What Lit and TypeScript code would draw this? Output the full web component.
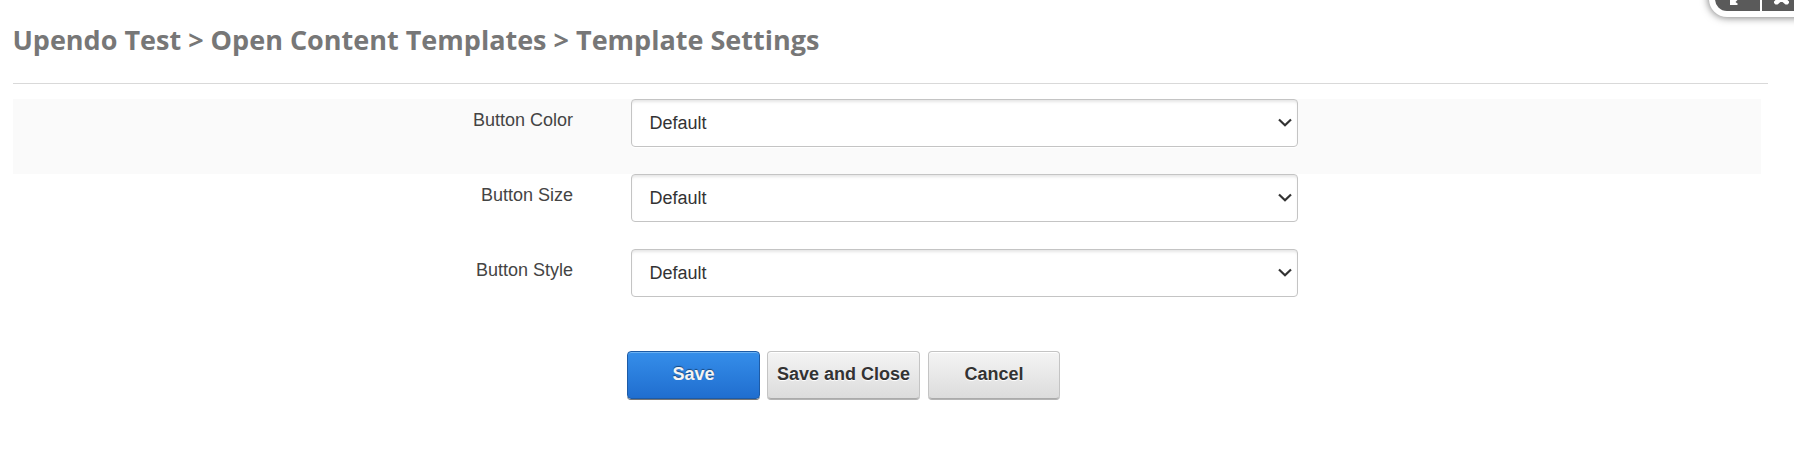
import { LitElement, html, css } from "lit";
import { customElement } from "lit/decorators.js";

@customElement("app-root")
export class AppRoot extends LitElement {
  static styles = css`
    :host {
      display: block;
      position: relative;
      box-sizing: border-box;
      height: 453px;
      padding-left: 13px;
      overflow: hidden;
      background: #fff;
      font: 18px/27px "Liberation Sans", Arial, sans-serif;
      color: #444;
    }
    * { box-sizing: border-box; }
    h1 {
      margin: 0 26px 15px 0;
      height: 84px;
      padding-top: 21px;
      border-bottom: 1px solid #d9d9d9;
      font: 700 27px/38px "Open Sans", sans-serif;
      color: #777;
      text-indent: -0.6px;
    }
    .row {
      display: grid;
      grid-template-columns: 560px 667px;
      column-gap: 58px;
      width: 1748px;
      height: 75px;
    }
    .row:first-of-type { background: #fafafa; }
    .label { text-align: right; padding-top: 8px; }
    .select {
      display: flex;
      align-items: center;
      justify-content: space-between;
      height: 48px;
      padding: 0 5px 0 17.500px;
      border: 1px solid #c4c4c4;
      border-radius: 4px;
      background: #fff;
      box-shadow: inset 0 3px 3px -1px rgba(0, 0, 0, 0.1), 0 1px 0 #fff;
      color: #333;
    }
    .select svg { display: block; }
    .actions {
      display: flex;
      gap: 7px;
      padding: 27px 0 0 614px;
    }
    button {
      height: 48px;
      padding: 0 0 2px;
      border: 1px solid #c4c4c4;
      border-bottom-color: #aaa;
      border-radius: 4px;
      background: linear-gradient(#f4f4f4, #dcdcdc);
      box-shadow: inset 0 1px 0 #fff, 0 1px 0 #b4b4b4;
      color: #333;
      font: 700 18px/27px "Liberation Sans", Arial, sans-serif;
      text-shadow: 0 1px 1px #fff;
    }
    .save {
      width: 133px;
      border-color: #1d5ba6;
      background: linear-gradient(#358eea, #206ecf);
      box-shadow: inset 0 1px 0 #6cb2f3, 0 1px 0 #777;
      color: #f4f4f4;
      text-shadow: 0 -1px 1px rgba(0, 0, 0, 0.45);
    }
    .close { width: 153px; margin-right: 1px; }
    .cancel { width: 132px; }
    .window {
      position: absolute;
      top: -30px;
      right: -30px;
      display: flex;
      gap: 2px;
      width: 115px;
      height: 47px;
      padding: 0 0 6px 6px;
      border-radius: 0 0 0 18px;
      background: #fff;
      box-shadow: 0 0 8px rgba(0, 0, 0, 0.6);
    }
    .window span { flex: none; height: 41px; padding-top: 30px; background: #5a5a5a; }
    .expand { width: 45px; border-radius: 0 0 0 12px; }
    .dismiss { width: 60px; }
    .window svg { display: block; }
  `;

  private fields = ["Button Color", "Button Size", "Button Style"];

  render() {
    return html`
      <h1>Upendo Test &gt; Open Content Templates &gt; Template Settings</h1>
      ${this.fields.map(
        (name) => html`<div class="row">
          <div class="label">${name}</div>
          <div class="select">
            <span>Default</span>
            <svg width="14" height="10" viewBox="0 0 14 10" fill="none" stroke="#333" stroke-width="2.200">
              <path d="M1 1.500 7 7.300 13 1.500" />
            </svg>
          </div>
        </div>`
      )}
      <div class="actions">
        <button class="save">Save</button>
        <button class="close">Save and Close</button>
        <button class="cancel">Cancel</button>
      </div>
      <div class="window">
        <span class="expand"><svg width="45" height="11" fill="#fff"><path d="M15 0H22.500L20.500 2 23 4 22 5H15Z" /></svg></span>
        <span class="dismiss"><svg width="30" height="11" fill="#fff"><path d="M13.500 0H25.500L27 1.500V3L25.500 4.500H23.500L20.500 2H18.500L15.500 4.500H13.500L12 3V1.500Z" /></svg></span>
      </div>
    `;
  }
}
